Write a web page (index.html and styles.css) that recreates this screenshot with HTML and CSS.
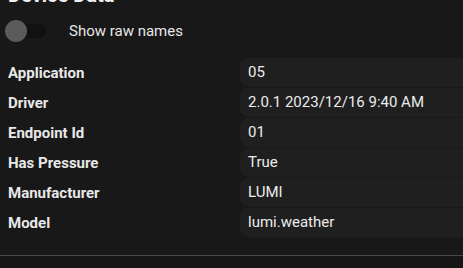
FILE: index.html
```html
<!DOCTYPE html>
<html lang="en">
  <head>
    <meta charset="UTF-8" />
    <meta name="viewport" content="width=device-width, initial-scale=1.0" />
    <link rel="stylesheet" href="styles.css">
  </head>
  <body>
    <div class="panel">
      <h2 class="title">Device Data</h2>

      <div class="toggle-row">
        <span class="switch"><span class="thumb"></span></span>
        <span class="toggle-label">Show raw names</span>
      </div>

      <div class="data">
        <div class="row">
          <div class="key">Application</div>
          <div class="val">05</div>
        </div>
        <div class="row">
          <div class="key">Driver</div>
          <div class="val">2.0.1 2023/12/16 9:40 AM</div>
        </div>
        <div class="row">
          <div class="key">Endpoint Id</div>
          <div class="val">01</div>
        </div>
        <div class="row">
          <div class="key">Has Pressure</div>
          <div class="val">True</div>
        </div>
        <div class="row">
          <div class="key">Manufacturer</div>
          <div class="val">LUMI</div>
        </div>
        <div class="row">
          <div class="key">Model</div>
          <div class="val">lumi.weather</div>
        </div>
      </div>
    </div>
    <div class="footer"></div>
  </body>
</html>
```

FILE: styles.css
```css
body {
  margin: 0;
  background-color: #181818;
  color: #e1e1e1;
  font-family: Roboto, "Liberation Sans", sans-serif;
  font-size: 15px;
  height: 268px;
  overflow: hidden;
}

.panel {
  height: 255px;
  overflow: hidden;
}

.title {
  margin: -17px 0 0 8px;
  height: 24px;
  font-size: 20px;
  font-weight: 700;
  color: #f0f0f0;
}

.toggle-row {
  display: flex;
  align-items: center;
  height: 22px;
  margin-top: 13px;
  padding-left: 5px;
}

.switch {
  position: relative;
  display: inline-block;
  width: 41px;
  height: 14px;
  border-radius: 7px;
  background-color: #111111;
}

.thumb {
  position: absolute;
  left: 0;
  top: -4px;
  width: 22px;
  height: 22px;
  border-radius: 50%;
  background-color: #5b5b5b;
}

.toggle-label {
  margin-left: 23px;
  color: #e6e6e6;
}

.data {
  margin-top: 16px;
  display: flex;
  flex-direction: column;
  gap: 1px;
}

.row {
  display: flex;
  align-items: center;
  height: 29px;
}

.key {
  width: 232px;
  padding-left: 8px;
  font-weight: 700;
  color: #e8e8e8;
}

.val {
  flex: 1;
  height: 29px;
  line-height: 29px;
  padding-left: 8px;
  background-color: #1f1f1f;
  border-radius: 9px 0 0 9px;
  color: #ececec;
}

.footer {
  border-top: 1px solid #474747;
  background-color: #161616;
  height: 12px;
}
```
